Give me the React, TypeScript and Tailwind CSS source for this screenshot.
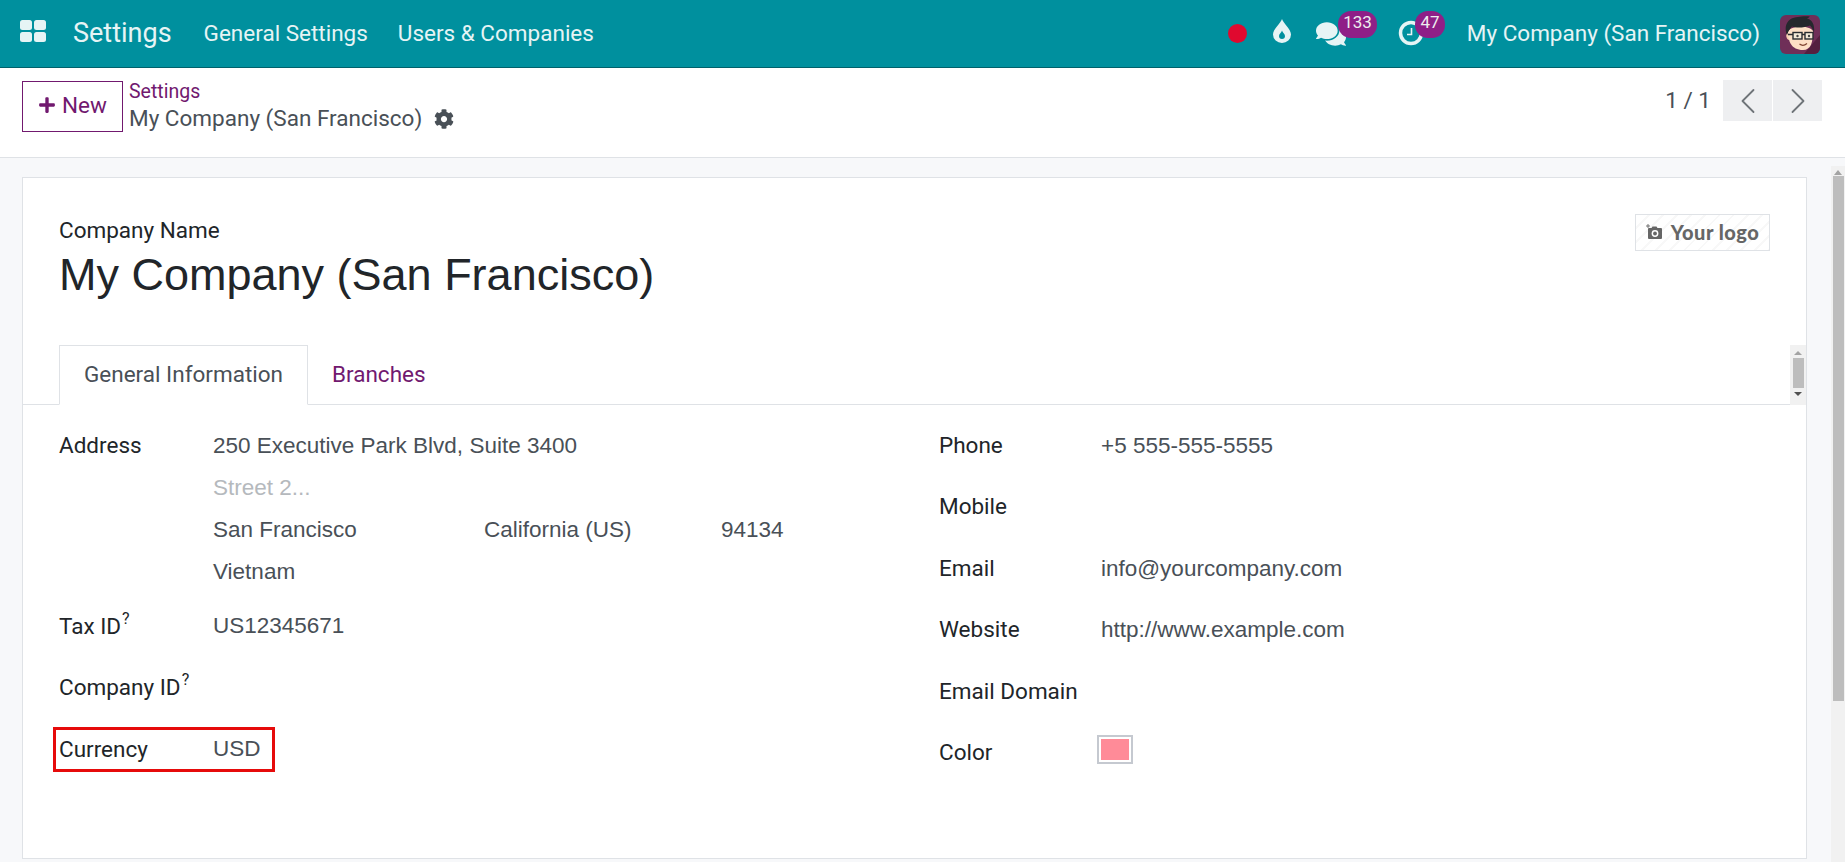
import React from 'react';
import { FaCog, FaComments, FaPlus } from 'react-icons/fa';
import { ChevronLeft, ChevronRight } from 'lucide-react';

const AppsIcon = () => (
  <svg width="26" height="22" viewBox="0 0 26 22" fill="#e6f4f5" className="-mt-[5px]">
    <rect x="0" y="0" width="12" height="10" rx="2.5" />
    <rect x="14" y="0" width="12" height="10" rx="2.5" />
    <rect x="0" y="12" width="12" height="10" rx="2.5" />
    <rect x="14" y="12" width="12" height="10" rx="2.5" />
  </svg>
);

const DropIcon = () => (
  <svg width="18" height="24" viewBox="0 0 18 24" className="-mt-[6px]">
    <path d="M9 0c1 4 9 10 9 15.500a9 8.500 0 0 1-18 0C0 10 8 4 9 0z" fill="#e6f4f5" />
    <path d="M9 11.500c.5 2 3 3.500 3 5.500a3 3 0 0 1-6 0c0-2 2.500-3.500 3-5.500z" fill="#00909e" />
  </svg>
);

const ClockIcon = () => (
  <svg width="26" height="26" viewBox="0 0 26 26" fill="none" stroke="#e6f4f5" className="-mt-[1px]">
    <circle cx="13" cy="13" r="10.500" strokeWidth="3.500" />
    <path d="M13.500 8v6.500H9" strokeWidth="1.600" />
  </svg>
);

// cartoon guy with glasses in the top right corner
const Avatar = () => (
  <svg width="40" height="39" viewBox="0 0 40 39" className="rounded-md mt-[1px]">
    <rect width="40" height="39" fill="#6f2f58" />
    <path d="M24 39 L40 20 V39Z" fill="#54203f" />
    <path d="M8 18c-2.500 0-2.500 6 1 7l1-1z" fill="#f6cfb0" />
    <path d="M8 16c0 10 3 19 15 19 8 0 10-8 10-19-4-6-20-6-25 0z" fill="#fde0c6" />
    <path d="M7 20C4 12 6 3 18 2c3-1 10-1 12-.500-1 1-2 1.500-3 2 5 1 8 6 7 14-1-3-2-5-4-7-5 2-13 3-18 1-2 2-4 5-5 8.500z" fill="#25282d" />
    <rect x="13" y="17.500" width="9" height="6.500" fill="#f4ead8" stroke="#2a2d31" strokeWidth="1.400" />
    <rect x="25" y="17.500" width="8" height="6.500" fill="#f4ead8" stroke="#2a2d31" strokeWidth="1.400" />
    <path d="M22 19.500h3M13 19.500H8" stroke="#2a2d31" strokeWidth="1.400" />
    <circle cx="17.500" cy="21" r="1.200" fill="#444" />
    <circle cx="29" cy="21" r="1.200" fill="#444" />
    <path d="M19.500 29c2 1.600 5 1.600 7.500-.500" stroke="#7e4330" strokeWidth="1.200" fill="none" />
  </svg>
);

const CameraPlus = () => (
  <svg width="17" height="16" viewBox="0 0 17 16" fill="#666666">
    <path d="M3 4h2.500l1-1.500h4l1 1.500H15a1 1 0 0 1 1 1v9a1 1 0 0 1-1 1H3a1 1 0 0 1-1-1V5a1 1 0 0 1 1-1z" />
    <circle cx="9" cy="9.500" r="3.400" fill="#fff" />
    <circle cx="9" cy="9.500" r="1.900" fill="#666666" />
    <path d="M2 0v4M0 2h4" stroke="#666666" strokeWidth="0.900" />
  </svg>
);

const Badge = ({ children, className }: { children: React.ReactNode; className: string }) => (
  <span className={`absolute top-[11px] h-[27px] rounded-[13px] bg-[#8f1f87] text-[#eee] text-[17px] leading-[22px] text-center ${className}`}>
    {children}
  </span>
);

const Row = ({ label, sup, value, h, labelClass }: { label: string; sup?: boolean; value?: string; h: string; labelClass?: string }) => (
  <div className={`flex ${h}`}>
    <div className={`w-[154px] text-[#212529] ${labelClass ?? ''}`}>
      {label}
      {sup && <sup className="text-[16px] leading-none ml-[1px] top-[-10px]">?</sup>}
    </div>
    <div className="font-['Liberation_Sans',sans-serif] text-[#495057]">{value}</div>
  </div>
);

const RightRow = ({ label, value }: { label: string; value?: string }) => (
  <div className="flex h-[61.4px]">
    <div className="w-[162px] -mt-[1px] text-[#212529]">{label}</div>
    <div className="font-['Liberation_Sans',sans-serif] text-[#495057]">{value}</div>
  </div>
);

const App: React.FC = () => {
  return (
    <div className="h-screen w-full flex flex-col overflow-hidden bg-white font-['Roboto',sans-serif] text-[22.5px] leading-[30px]">
      <header className="relative h-[68px] shrink-0 bg-[#00909e] border-b border-[#00616b] flex items-center pl-[20px] pr-[25px] text-[#e6f4f5]">
        <AppsIcon />
        <span className="ml-[27px] pb-[2px] text-[27px]">Settings</span>
        <span className="ml-[32px] pb-[2px]">General Settings</span>
        <span className="ml-[30px] pb-[2px]">Users &amp; Companies</span>
        <div className="ml-auto flex items-center">
          <span className="w-[19px] h-[19px] rounded-full bg-[#e0092f]" />
          <span className="ml-[26px] flex"><DropIcon /></span>
          <FaComments className="ml-[25px] text-[#e6f4f5]" size={30} />
          <span className="ml-[52px] flex"><ClockIcon /></span>
          <span className="ml-[43px] pb-[2px]">My Company (San Francisco)</span>
          <span className="ml-[20px] flex"><Avatar /></span>
        </div>
        <Badge className="left-[1338px] w-[39px]">133</Badge>
        <Badge className="left-[1415px] w-[30px]">47</Badge>
      </header>

      <div className="h-[90px] shrink-0 border-b border-[#dfe2e6] flex items-start pl-[22px] pr-[23px] pt-[13px]">
        <button className="w-[101px] h-[51px] pb-[3px] border border-[#71196f] text-[#71196f] flex items-center justify-center gap-[6px]">
          <FaPlus size={18} />
          New
        </button>
        <div className="ml-[6px] -mt-[3px]">
          <div className="text-[19.5px] leading-[28px] text-[#71196f]">Settings</div>
          <div className="flex items-center text-[#495057] leading-[25px]">
            My Company (San Francisco)
            <FaCog className="ml-[12px]" size={20} />
          </div>
        </div>
        <div className="ml-auto flex items-start">
          <span className="mt-[4px] text-[#495057]">1 / 1</span>
          <div className="ml-[12px] w-[49px] h-[41px] -mt-[1px] bg-[#eeeff1] flex items-center justify-center text-[#6f7479]">
            <ChevronLeft className="shrink-0" size={44} strokeWidth={1} />
          </div>
          <div className="ml-[1px] w-[49px] h-[41px] -mt-[1px] bg-[#eeeff1] flex items-center justify-center text-[#6f7479]">
            <ChevronRight className="shrink-0" size={44} strokeWidth={1} />
          </div>
        </div>
      </div>

      <div className="flex-1 min-h-0 flex bg-[#f7f8fa]">
        <main className="flex-1 min-w-0 pl-[22px] pr-[24px] pt-[19px] pb-[3px]">
          <div className="relative h-full bg-white border border-[#dfe2e6]">
            <div className="pl-[36px] pr-[36px] pt-[37px] flex items-start justify-between">
              <div>
                <div className="text-[#212529] leading-[30px]">Company Name</div>
                <h1 className="font-['Liberation_Sans',sans-serif] text-[45px] leading-[54px] mt-[3px] text-[#212529]">
                  My Company (San Francisco)
                </h1>
              </div>
              <div className="-mt-[1px] w-[135px] h-[37px] pb-[2px] border border-[#dfe2e6] flex items-center justify-center gap-[8px] font-['Lato',sans-serif] font-black text-[20px] tracking-[0.5px] text-[#666666] bg-[repeating-linear-gradient(135deg,#fff,#fff_8px,#f8f8f8_8px,#f8f8f8_10px)]">
                <CameraPlus />
                Your logo
              </div>
            </div>

            <div className="relative mt-[43px] h-[60px] border-b border-[#dfe2e6] pl-[36px] flex">
              <div className="w-[249px] h-[60px] pb-[2px] bg-white border border-[#dfe2e6] border-b-white flex items-center justify-center text-[#495057]">
                General Information
              </div>
              <div className="ml-[24px] h-[59px] pb-[2px] flex items-center text-[#71196f]">Branches</div>
              <div className="absolute right-0 top-0 w-[16px] h-[60px] bg-[#f1f1f1] flex flex-col items-center">
                <span className="mt-[6px] w-0 h-0 border-x-[4px] border-x-transparent border-b-[4px] border-b-[#a3a3a3]" />
                <span className="mt-[3px] w-[11px] h-[30px] bg-[#bdbdbd]" />
                <span className="mt-[4px] w-0 h-0 border-x-[4px] border-x-transparent border-t-[4px] border-t-[#505050]" />
              </div>
            </div>

            <div className="pl-[36px] pt-[26px] flex">
              <section className="w-[880px]">
                <div className="flex h-[42px]">
                  <div className="w-[154px] -mt-[1px] text-[#212529]">Address</div>
                  <div className="font-['Liberation_Sans',sans-serif] text-[#495057]">250 Executive Park Blvd, Suite 3400</div>
                </div>
                <div className="h-[42px] pl-[154px] font-['Liberation_Sans',sans-serif] text-[#b5b9bd]">Street 2...</div>
                <div className="h-[42px] pl-[154px] flex font-['Liberation_Sans',sans-serif] text-[#495057]">
                  <span className="w-[271px]">San Francisco</span>
                  <span className="w-[237px]">California (US)</span>
                  <span>94134</span>
                </div>
                <div className="h-[54px] pl-[154px] font-['Liberation_Sans',sans-serif] text-[#495057]">Vietnam</div>
                <Row label="Tax ID" sup value="US12345671" h="h-[61px]" />
                <Row label="Company ID" sup h="h-[62px]" />
                <Row label="Currency" value="USD" h="h-[42px]" />
              </section>
              <section className="flex-1">
                <RightRow label="Phone" value="+5 555-555-5555" />
                <RightRow label="Mobile" />
                <RightRow label="Email" value="info@yourcompany.com" />
                <RightRow label="Website" value="http://www.example.com" />
                <RightRow label="Email Domain" />
                <div className="flex">
                  <div className="w-[160px] -mt-[1px] text-[#212529]">Color</div>
                  <div className="-mt-[1px] w-[32px] h-[25px] bg-[#ff8b98] border-[2px] border-white outline-2 outline-[#c5c9d0]" />
                </div>
              </section>
            </div>

            {/* annotation drawn on top of the screenshot */}
            <div className="absolute left-[30px] top-[549px] w-[222px] h-[45px] border-[3px] border-[#e60b0b]" />
          </div>
        </main>
        <div className="w-[14px] shrink-0 mt-[8px] bg-[#f1f1f1] flex flex-col items-center">
          <span className="mt-[4px] w-0 h-0 border-x-[4px] border-x-transparent border-b-[5px] border-b-[#a3a3a3]" />
          <span className="mt-[1px] w-[11px] h-[525px] bg-[#bdbdbd]" />
        </div>
      </div>
    </div>
  );
};

export default App;
